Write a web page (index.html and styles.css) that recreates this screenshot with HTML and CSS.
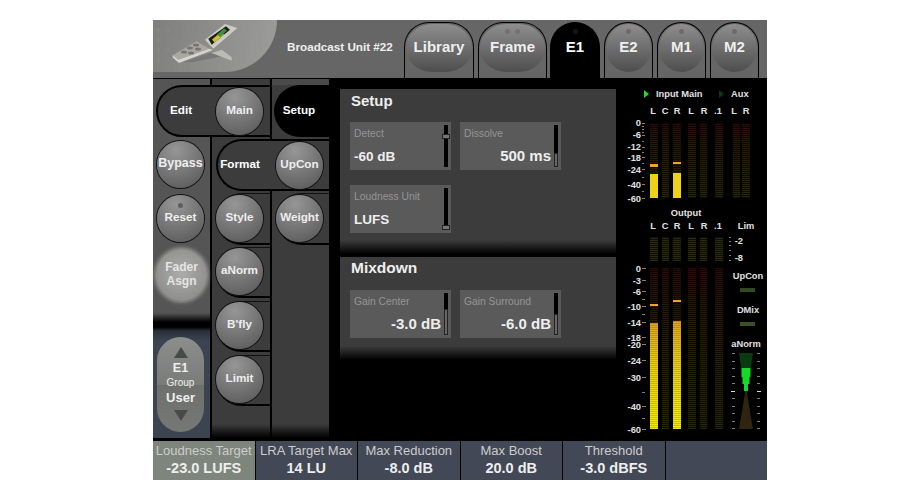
FILE: index.html
```html
<!DOCTYPE html>
<html lang="en">
<head>
<meta charset="utf-8">
<title>Broadcast Unit</title>
<link rel="stylesheet" href="styles.css">
</head>
<body>
<main class="device">
  <header class="top">
    <div class="logo">
      <svg class="logo-art" width="124" height="52" viewBox="0 0 124 52">
        <g fill="#868684"><circle cx="5.300" cy="9.700" r="2.200"/><circle cx="15.300" cy="9.700" r="2.200"/><circle cx="5.300" cy="19.700" r="2.200"/><circle cx="15.300" cy="19.700" r="2.200"/><circle cx="5.300" cy="29.700" r="2.200"/><circle cx="15.300" cy="29.700" r="2.200"/><circle cx="5.300" cy="39.700" r="2.200"/><circle cx="15.300" cy="39.700" r="2.200"/></g>
        <path d="M30 42 L57 33 L70 36 L40 42 Z" fill="#787876"/>
        <path d="M58.700 33 L68.700 29.700 L78.700 37.300 L78.700 40.700 Z" fill="#bcbcb6"/>
        <path d="M19.700 35.300 L43.700 21.300 L56.300 28.700 L25.300 39.700 Z" fill="#a9a8a0"/>
        <path d="M19.700 35.300 L25.300 39.700 L56.300 28.700 L60 30 L26 43 L19.700 37.500 Z" fill="#d6d5ce"/>
        <path d="M52 19.700 L72 4 L84.300 8 L60.300 28.700 Z" fill="#cdccc4"/>
        <path d="M55.300 18.700 L73 6.300 L77 9.700 L58.700 24.700 Z" fill="#1b1f14"/>
        <path d="M59 19.500 L68 12 L71 14.500 L61.500 22.500 Z" fill="#cdbf3a"/>
        <path d="M64 14.500 L71 8.500 L74 10.500 L67 17 Z" fill="#3f8f3a"/>
        <g fill="#767570"><ellipse cx="31" cy="32" rx="3" ry="1.500"/><ellipse cx="37" cy="28" rx="3" ry="1.500"/><ellipse cx="43" cy="25" rx="3" ry="1.500"/><ellipse cx="38" cy="33" rx="3" ry="1.500"/><ellipse cx="45" cy="29" rx="3" ry="1.500"/></g>
      </svg>
    </div>
    <div class="unit">Broadcast Unit #22</div>
    <nav class="tabs">
      <div class="tab wide lib"><span class="pill">Library</span></div>
      <div class="tab wide frm"><span class="pill"><i class="dots"></i>Frame</span></div>
      <div class="tab active"><span class="pill"><i class="dot dark"></i>E1</span></div>
      <div class="tab"><span class="pill"><i class="dot"></i>E2</span></div>
      <div class="tab"><span class="pill"><i class="dot"></i>M1</span></div>
      <div class="tab"><span class="pill"><i class="dot"></i>M2</span></div>
    </nav>
  </header>

  <div class="middle">
    <aside class="nav">
      <div class="bg bg1"></div>
      <div class="bg bg2"></div>
      <div class="bg bg3"></div>

      <div class="seltab edit"><span class="txt">Edit</span><button class="round">Main</button></div>
      <div class="seltab format"><span class="txt">Format</span><button class="round">UpCon</button></div>
      <div class="seltab setupt"><span class="txt">Setup</span></div>

      <div class="cell c1 r3"><button class="round big-label">Bypass</button></div>
      <div class="cell c1 r4"><button class="round"><i class="dot soft"></i>Reset</button></div>
      <div class="cell c1 r5 fader"><button class="round glow">Fader<br>Asgn</button></div>

      <div class="group">
        <div class="stepper">
          <span class="tri up"></span>
          <b class="g1">E1</b>
          <span class="g2">Group</span>
          <b class="g3">User</b>
          <span class="tri down"></span>
        </div>
      </div>

      <div class="cell box c2 r4"><button class="round">Style</button></div>
      <div class="cell box c2 r5 tight"><button class="round">aNorm</button></div>
      <div class="cell box c2 r6 tight"><button class="round">B'fly</button></div>
      <div class="cell box c2 r7 tight"><button class="round">Limit</button></div>
      <div class="cell box c3 r4"><button class="round">Weight</button></div>
    </aside>

    <section class="panels">
      <div class="panel setup">
        <h2>Setup</h2>
        <div class="fields">
          <div class="field"><span class="lab">Detect</span><span class="val">-60 dB</span><span class="track"><i class="knob k-top"></i></span></div>
          <div class="field"><span class="lab">Dissolve</span><span class="val right">500 ms</span><span class="track"><i class="fill f-low"></i></span></div>
          <div class="field"><span class="lab">Loudness Unit</span><span class="val">LUFS</span><span class="track"><i class="knob k-bot"></i></span></div>
        </div>
      </div>
      <div class="panel mix">
        <h2>Mixdown</h2>
        <div class="fields">
          <div class="field"><span class="lab">Gain Center</span><span class="val right">-3.0 dB</span><span class="track"><i class="fill f-mid"></i></span></div>
          <div class="field"><span class="lab">Gain Surround</span><span class="val right">-6.0 dB</span><span class="track"><i class="fill f-mid2"></i></span></div>
        </div>
      </div>
    </section>

    <section class="meters">
      <svg width="149" height="361" viewBox="618 79 149 361" class="meter-svg">
        <defs>
          <pattern id="seg" width="4" height="2" patternUnits="userSpaceOnUse"><rect width="4" height="1.300" fill="#fff"/></pattern>
          <pattern id="lines" width="4" height="2" patternUnits="userSpaceOnUse"><rect y="1.400" width="4" height="0.600" fill="#000" fill-opacity="0.25"/></pattern>
          <linearGradient id="yel" x1="0" x2="0" y1="0" y2="1"><stop offset="0" stop-color="#dfa41c"/><stop offset="0.4" stop-color="#e9cd1a"/><stop offset="1" stop-color="#f4e612"/></linearGradient>
          <linearGradient id="off" x1="0" x2="0" y1="0" y2="1"><stop offset="0" stop-color="#2a0c06"/><stop offset="0.25" stop-color="#261806"/><stop offset="1" stop-color="#262608"/></linearGradient>
          <mask id="segs" maskUnits="userSpaceOnUse" x="618" y="79" width="149" height="361"><rect x="618" y="79" width="149" height="361" fill="url(#seg)"/></mask>
        </defs>
        <polygon points="644,90 649,94 644,98" fill="#27d62b"/>
        <polygon points="719,90 724,94 719,98" fill="#0c3a10"/>
        <g class="mtxt" fill="#e0e0e0">
          <text x="656" y="97">Input Main</text><text x="731" y="97">Aux</text>
          <g text-anchor="middle">
            <text x="653" y="114">L</text><text x="665" y="114">C</text><text x="677" y="114">R</text><text x="691" y="114">L</text><text x="704" y="114">R</text><text x="718" y="114">.1</text><text x="734" y="114">L</text><text x="746" y="114">R</text>
            <text x="686" y="215.500">Output</text>
            <text x="653" y="229">L</text><text x="665" y="229">C</text><text x="677" y="229">R</text><text x="691" y="229">L</text><text x="704" y="229">R</text><text x="718" y="229">.1</text><text x="746" y="229">Lim</text>
            <text x="748" y="279">UpCon</text><text x="748" y="312.500">DMix</text><text x="746" y="346.500">aNorm</text>
          </g>
          <g text-anchor="end">
            <text x="641" y="126">0</text><text x="641" y="138">-6</text><text x="641" y="150">-12</text><text x="641" y="160.500">-18</text><text x="641" y="172.500">-24</text><text x="641" y="187.500">-40</text><text x="641" y="201.500">-60</text>
            <text x="743" y="244">-2</text><text x="743" y="261">-8</text>
            <text x="641" y="271.500">0</text><text x="641" y="283.500">-3</text><text x="641" y="294.500">-6</text><text x="641" y="309.500">-10</text><text x="641" y="325.500">-14</text><text x="641" y="340.500">-18</text><text x="641" y="347.500">-20</text><text x="641" y="363.500">-24</text><text x="641" y="380.500">-30</text><text x="641" y="409.500">-40</text><text x="641" y="432.500">-60</text>
          </g>
        </g>
        <g fill="url(#off)" mask="url(#segs)">
          <rect x="650" y="123" width="8" height="75"/><rect x="662" y="123" width="7" height="75"/><rect x="673" y="123" width="8" height="75"/><rect x="688" y="123" width="8" height="75"/><rect x="700" y="123" width="7" height="75"/><rect x="715" y="123" width="8" height="75"/><rect x="733" y="123" width="7" height="75"/><rect x="742" y="123" width="8" height="75"/>
          <rect x="650" y="237" width="8" height="24" fill="#2a2a0c"/><rect x="662" y="237" width="7" height="24" fill="#2a2a0c"/><rect x="673" y="237" width="8" height="24" fill="#2a2a0c"/><rect x="688" y="237" width="8" height="24" fill="#2a2a0c"/><rect x="700" y="237" width="7" height="24" fill="#2a2a0c"/><rect x="715" y="237" width="8" height="24" fill="#2a2a0c"/>
          <rect x="650" y="268" width="8" height="161"/><rect x="662" y="268" width="7" height="161"/><rect x="673" y="268" width="8" height="161"/><rect x="688" y="268" width="8" height="161"/><rect x="700" y="268" width="7" height="161"/><rect x="715" y="268" width="8" height="161"/>
        </g>
        <rect x="650" y="174" width="8" height="24" fill="#eed218"/>
        <rect x="673" y="173" width="8" height="25" fill="#eed218"/>
        <rect x="650" y="164" width="8" height="3" fill="#f0a52a"/>
        <rect x="673" y="162" width="8" height="2" fill="#f0a52a"/>
        <rect x="650" y="323" width="8" height="106" fill="url(#yel)"/>
        <rect x="673" y="321" width="8" height="108" fill="url(#yel)"/>
        <rect x="650" y="304" width="8" height="2" fill="#f0a52a"/>
        <rect x="673" y="300" width="8" height="2" fill="#f0a52a"/>
        <rect x="650" y="323" width="8" height="106" fill="url(#lines)"/>
        <rect x="673" y="321" width="8" height="108" fill="url(#lines)"/>
        <g stroke="#808080" stroke-width="1">
          <path d="M642 123.500h3M642 126.500h2M642 129.500h2M642 132.500h2M642 135.500h3M642 141.500h2M642 147.500h3M642 152.500h2M642 157.500h3M642 163.500h2M642 169.500h3M642 177.500h2M642 184.500h3M642 191.500h2M642 198.500h3"/>
          <path d="M729 237.500h2M729 241.500h2M729 245.500h2M729 250.500h2M729 255.500h2M729 260.500h2"/>
          <path d="M642 268.500h4M642 280.500h4M642 291.500h4M642 299.500h3M642 306.500h4M642 314.500h3M642 322.500h4M642 337.500h4M642 344.500h4M642 360.500h4M642 377.500h4M642 392.500h3M642 406.500h4M642 418.500h3M642 429.500h4"/>
          <path d="M732 353.500h3M732 361.500h3M732 368.500h3M732 376.500h3M732 383.500h3M732 398.500h3M732 406.500h3M732 413.500h3M732 421.500h3M732 428.500h3M757 353.500h3M757 361.500h3M757 368.500h3M757 376.500h3M757 383.500h3M757 398.500h3M757 406.500h3M757 413.500h3M757 421.500h3M757 428.500h3"/>
        </g>
        <path d="M731 391.500h4M757 391.500h4" stroke="#ddd"/>
        <rect x="740" y="288" width="15" height="4" fill="#2f4a23"/>
        <rect x="740" y="322" width="15" height="4" fill="#3a4f2a"/>
        <polygon points="739,353 753,353 747,393 745,393" fill="#0a3a10"/>
        <polygon points="745,393 747,393 753,429 739,429" fill="#2e2410"/>
        <polygon points="741.500,368 750.500,368 750.500,377 749.500,377 749.500,384 748,384 748,391 744,391 744,384 742.500,384 742.500,377 741.500,377" fill="#15d92a"/>
      </svg>
    </section>
  </div>

  <footer class="softkeys">
    <div class="key on"><span>Loudness Target</span><b>-23.0 LUFS</b></div>
    <div class="key"><span>LRA Target Max</span><b>14 LU</b></div>
    <div class="key"><span>Max Reduction</span><b>-8.0 dB</b></div>
    <div class="key"><span>Max Boost</span><b>20.0 dB</b></div>
    <div class="key"><span>Threshold</span><b>-3.0 dBFS</b></div>
    <div class="key empty"></div>
  </footer>
</main>
</body>
</html>
```
FILE: styles.css
```css
* { box-sizing: border-box; }
html, body { margin: 0; padding: 0; background: #fff; }
body { width: 920px; height: 500px; overflow: hidden; font-family: "Liberation Sans", Arial, sans-serif; color: #eee; }
.device { width: 614px; height: 460px; margin: 20px 0 0 153px; background: #000; display: flex; flex-direction: column; }

.top { height: 58px; flex: none; background: #666; display: flex; align-items: flex-start; }
.logo { width: 124px; height: 52px; flex: none; background: linear-gradient(100deg, #7f7f7d, #9c9d99); border-radius: 0 0 52px 0; }
.logo-art { display: block; }
.unit { width: 127px; flex: none; padding-left: 10px; font-size: 11.700px; font-weight: 700; line-height: 54px; white-space: nowrap; color: #eee; }
.tabs { display: flex; gap: 4px; height: 58px; padding-top: 2px; }
.tab { width: 49px; height: 56px; padding: 1px 1px 0; background: #666; border: 1px solid #000; border-bottom: 0; border-radius: 25px 25px 0 0; }
.tab.lib { width: 70px; }
.tab.frm { width: 69px; margin-right: -1px; }
.tab.active { width: 50px; background: #000; }
.pill { position: relative; display: flex; align-items: center; justify-content: center; height: 48px; padding-bottom: 3px; border-radius: 50%; font-size: 15px; font-weight: 700; color: #eee; background: linear-gradient(180deg, #8e8e8e, #4e4e4e); }
.tab.wide .pill { border-radius: 26px / 24px; }
.tab.active .pill { background: none; color: #fff; }
.dot, .dots { position: absolute; top: 5px; left: 50%; width: 5px; height: 5px; margin-left: -2.500px; border-radius: 50%; background: #736868; }
.dots { margin-left: -7.500px; background: #7a6e6e; box-shadow: 10px 0 #7a6e6e; }
.dot.dark { background: #201010; }
.dot.soft { top: 8px; background: #5e5e5e; }

.middle { flex: 1; min-height: 0; display: flex; padding-top: 1px; }
.nav { display: grid; width: 176px; height: 359px; flex: none; grid-template-columns: 59px 60px 57px; grid-template-rows: 6px repeat(6, 54px) 29px; }
.bg { grid-row: 1 / -1; }
.bg1 { grid-column: 1; border-right: 2px solid #000; background: #555; }
.bg2 { grid-column: 2; border-right: 2px solid #000; background: linear-gradient(180deg, #3c3c3c 0, #3c3c3c 345px, #000 359px); }
.bg3 { grid-column: 3; background: linear-gradient(180deg, #4a4a4a 0, #4a4a4a 6px, #3c3c3c 6px, #3c3c3c 345px, #000 359px); }

.round { position: relative; display: block; flex: none; width: 47px; height: 47px; padding: 0 0 3px; border: 0; border-radius: 50%; font: 700 11.700px/14px "Liberation Sans", Arial, sans-serif; color: #eee; background: radial-gradient(circle at 40% 20%, #969696, #5e5e5e 85%); box-shadow: 0 0 0 1px #111; }
.big-label { font-size: 12.500px; }
.round.glow { width: 51px; height: 52px; color: #e4e4e4; font-size: 12px; background: radial-gradient(circle at 50% 45%, #acacaa, #8e8e8c 75%); box-shadow: 0 0 4px 1px #a8a8a6; }

.seltab { display: flex; align-items: center; height: 52px; background: #3c3c3c; border: 2px solid #000; font-size: 11.700px; font-weight: 700; color: #fff; }
.txt { flex: none; text-align: center; padding-bottom: 3px; }
.edit { grid-column: 1 / 3; grid-row: 2; margin-left: 3px; border-radius: 26px 0 0 26px; }
.edit .txt { width: 46px; }
.edit .round { margin-left: 12px; }
.format { grid-column: 2 / 4; grid-row: 3; margin-left: 4px; border-right: 0; border-radius: 26px 0 0 26px; }
.format .txt { width: 44px; }
.format .round { margin-left: 14px; }
.setupt { grid-column: 3; grid-row: 2; margin-left: 2px; background: #000; border: 0; border-radius: 26px 0 0 26px; }
.setupt .txt { width: 50px; }

.cell { padding: 2px 0 0 4px; }
.c1 { grid-column: 1; }
.c2 { grid-column: 2; margin-right: 2px; }
.c3 { grid-column: 3; }
.r3 { grid-row: 3; }
.r4 { grid-row: 4; }
.r5 { grid-row: 5; }
.r6 { grid-row: 6; }
.r7 { grid-row: 7; }
.box { height: 52px; margin-left: 4px; padding: 1px 0 0; border-top: 1px solid #111; border-bottom: 2px solid #000; border-radius: 26px 0 0 26px; }
.tight { height: 51px; padding-top: 0; }
.fader { padding-left: 3px; }

.group { grid-column: 1; grid-row: 6 / -1; margin-right: 2px; padding: 36px 0 0 4px; background: linear-gradient(180deg, #555 0, #555 12px, #000 21px, #000 26px, #2a303a 30px, #3c4452 40px, #3c4452 100%); }
.stepper { position: relative; width: 47px; height: 95px; border-radius: 24px; background: linear-gradient(180deg, #8c8e8c 0, #7a7c7a 50%, #6e706e 50.500%, #767876 100%); display: flex; flex-direction: column; align-items: center; color: #eee; }
.g1 { font-size: 12.500px; line-height: 14px; margin-top: 3px; }
.g2 { font-size: 10px; line-height: 12px; margin-top: 2px; }
.g3 { font-size: 13px; line-height: 16px; margin-top: 1px; }
.tri { width: 0; height: 0; border-left: 7px solid transparent; border-right: 7px solid transparent; }
.tri.up { margin-top: 10px; border-bottom: 11px solid #474a48; }
.tri.down { margin-top: 4px; border-top: 11px solid #474a48; }

.panels { width: 289px; flex: none; padding: 10px 2px 0 11px; display: flex; flex-direction: column; gap: 3px; background: #000; }
.panel { width: 276px; padding: 3px 10px 0; background: linear-gradient(180deg, #3c3c3c 0, #3c3c3c calc(100% - 14px), #000 100%); }
.setup { height: 165px; }
.mix { height: 103px; padding-top: 2px; }
h2 { margin: 0 0 13px 1px; font-size: 15px; line-height: 17px; font-weight: 700; color: #eee; }
.mix h2 { margin-bottom: 14px; font-size: 15.500px; }
.fields { display: grid; grid-template-columns: 101px 101px; gap: 15px 9px; }
.field { position: relative; height: 48px; background: #5a5a5a; padding: 5px 10px 0 4px; display: flex; flex-direction: column; }
.lab { font-size: 10.300px; line-height: 13px; color: #959595; white-space: nowrap; }
.val { font-size: 13.500px; font-weight: 700; line-height: 18px; margin-top: 8px; color: #eee; white-space: nowrap; }
.val.right { font-size: 15px; text-align: right; margin-top: 7px; }
.track { position: absolute; right: 3px; top: 3px; bottom: 3px; width: 4px; background: #000; }
.knob { position: absolute; left: -2px; width: 8px; height: 5px; background: #777; border: 1px solid #222; }
.k-top { top: 9px; }
.k-bot { bottom: 0; }
.fill { position: absolute; left: 0; right: 0; bottom: 0; background: #666; border: 1px solid #222; }
.f-low { height: 14px; }
.f-mid { height: 26px; }
.f-mid2 { height: 21px; }

.meters { width: 149px; flex: none; }
.meter-svg { display: block; }
.mtxt text { font-family: "Liberation Sans", Arial, sans-serif; font-size: 9.300px; font-weight: 700; }

.softkeys { height: 40px; flex: none; display: flex; gap: 1px; background: #000; padding-top: 1px; }
.key { width: 101.500px; background: #424855; display: flex; flex-direction: column; align-items: center; padding-top: 2px; color: #eee; }
.key span { font-size: 13px; line-height: 16px; color: #ccc; white-space: nowrap; }
.key b { font-size: 14.500px; line-height: 19px; }
.key.on { background: #7d857c; }
.key.empty { flex: 1; }
```
